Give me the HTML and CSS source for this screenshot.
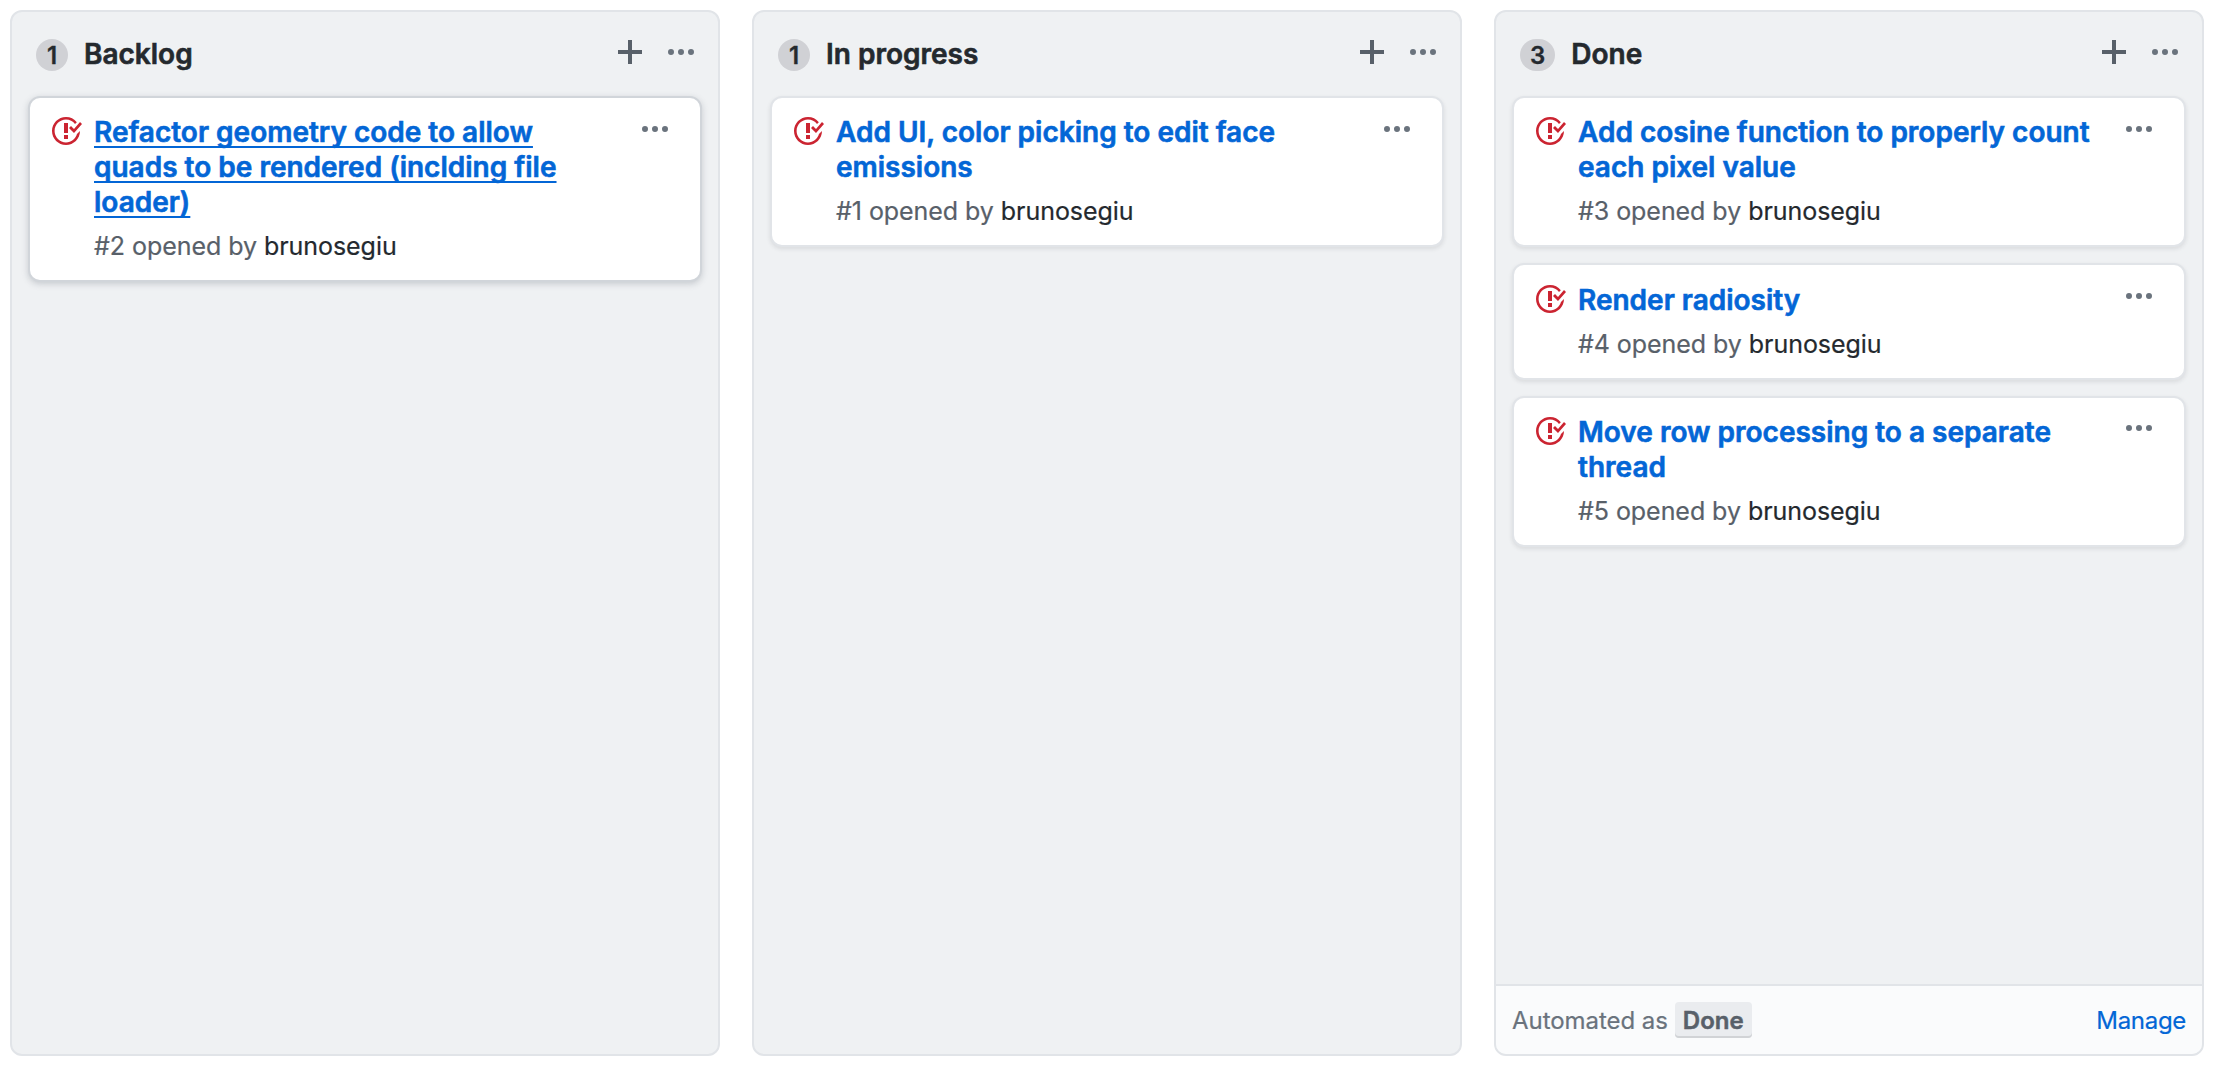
FILE: index.html
```html
<!DOCTYPE html>
<html lang="en">
<head>
<meta charset="utf-8">
<title>Project board</title>
<link rel="stylesheet" href="styles.css">
</head>
<body>
<svg class="defs" aria-hidden="true">
  <symbol id="issue-closed" viewBox="0 0 16 16"><path fill-rule="evenodd" d="M7 10h2v2H7v-2zm2-6H7v5h2V4zm1.5 1.5l-1 1L12 9l4-4.5-1-1L12 7l-1.5-1.5zM8 13.7A5.71 5.71 0 0 1 2.3 8c0-3.14 2.56-5.7 5.7-5.7 1.83 0 3.45.88 4.5 2.2l.92-.92A6.947 6.947 0 0 0 8 1C4.14 1 1 4.14 1 8s3.14 7 7 7 7-3.14 7-7l-1.52 1.52c-.66 2.41-2.86 4.19-5.48 4.19v-.01z"/></symbol>
  <symbol id="plus" viewBox="0 0 12 16"><path d="M12 9H7v5H5V9H0V7h5V2h2v5h5z"/></symbol>
  <symbol id="kebab" viewBox="0 0 13 16"><path d="M1.5 9a1.5 1.5 0 1 0 0-3 1.5 1.5 0 0 0 0 3zm5 0a1.5 1.5 0 1 0 0-3 1.5 1.5 0 0 0 0 3zm5 0a1.5 1.5 0 1 0 0-3 1.5 1.5 0 0 0 0 3z"/></symbol>
</svg>
<main class="board">
  <section class="column">
    <header class="column-header">
      <span class="counter">1</span>
      <h3 class="column-title">Backlog</h3>
      <svg class="plus"><use href="#plus"/></svg>
      <svg class="kebab"><use href="#kebab"/></svg>
    </header>
    <div class="cards">
      <article class="card card-hover">
        <svg class="status"><use href="#issue-closed"/></svg>
        <div class="card-body">
          <h4 class="card-title"><a>Refactor geometry code to allow quads to be rendered (inclding file loader)</a></h4>
          <p class="meta">#2 opened by <a class="author">brunosegiu</a></p>
        </div>
        <svg class="kebab"><use href="#kebab"/></svg>
      </article>
    </div>
  </section>

  <section class="column">
    <header class="column-header">
      <span class="counter">1</span>
      <h3 class="column-title">In progress</h3>
      <svg class="plus"><use href="#plus"/></svg>
      <svg class="kebab"><use href="#kebab"/></svg>
    </header>
    <div class="cards">
      <article class="card">
        <svg class="status"><use href="#issue-closed"/></svg>
        <div class="card-body">
          <h4 class="card-title"><a>Add UI, color picking to edit face emissions</a></h4>
          <p class="meta">#1 opened by <a class="author">brunosegiu</a></p>
        </div>
        <svg class="kebab"><use href="#kebab"/></svg>
      </article>
    </div>
  </section>

  <section class="column">
    <header class="column-header">
      <span class="counter">3</span>
      <h3 class="column-title">Done</h3>
      <svg class="plus"><use href="#plus"/></svg>
      <svg class="kebab"><use href="#kebab"/></svg>
    </header>
    <div class="cards">
      <article class="card">
        <svg class="status"><use href="#issue-closed"/></svg>
        <div class="card-body">
          <h4 class="card-title"><a>Add cosine function to properly count each pixel value</a></h4>
          <p class="meta">#3 opened by <a class="author">brunosegiu</a></p>
        </div>
        <svg class="kebab"><use href="#kebab"/></svg>
      </article>
      <article class="card">
        <svg class="status"><use href="#issue-closed"/></svg>
        <div class="card-body">
          <h4 class="card-title"><a>Render radiosity</a></h4>
          <p class="meta">#4 opened by <a class="author">brunosegiu</a></p>
        </div>
        <svg class="kebab"><use href="#kebab"/></svg>
      </article>
      <article class="card">
        <svg class="status"><use href="#issue-closed"/></svg>
        <div class="card-body">
          <h4 class="card-title"><a>Move row processing to a separate thread</a></h4>
          <p class="meta">#5 opened by <a class="author">brunosegiu</a></p>
        </div>
        <svg class="kebab"><use href="#kebab"/></svg>
      </article>
    </div>
    <footer class="column-footer">
      <span class="automated">Automated as</span>
      <span class="label">Done</span>
      <a class="manage">Manage</a>
    </footer>
  </section>
</main>
</body>
</html>
```
FILE: styles.css
```css
* { box-sizing: border-box; }

body {
  margin: 0;
  background: #fff;
  color: #24292e;
  font-family: Inter, "Liberation Sans", sans-serif;
}

h3, h4, p { margin: 0; }

.defs { display: none; }

svg {
  display: block;
  flex: none;
  fill: currentColor;
}

.board {
  display: flex;
  gap: 32px;
  height: 1066px;
  padding: 10px;
}

.column {
  display: flex;
  flex: none;
  flex-direction: column;
  width: 710px;
  height: 1046px;
  overflow: hidden;
  background: #eff1f3;
  border: 2px solid #e1e4e8;
  border-radius: 12px;
}

.column-header {
  display: flex;
  align-items: flex-start;
  height: 84px;
  padding: 24px 24px 0 24px;
  color: #586069;
}

.counter {
  min-width: 32px;
  height: 32px;
  margin: 3px 16px 0 0;
  padding: 0 10px;
  border-radius: 20px;
  background: #d0d1d5;
  color: #24292e;
  font-size: 24px;
  font-weight: 600;
  line-height: 33px;
  text-align: center;
  -webkit-text-stroke: 0.3px;
}

.column-title {
  flex: 1;
  padding-top: 1px;
  color: #24292e;
  font-size: 28px;
  font-weight: 600;
  line-height: 35px;
  -webkit-text-stroke: 0.6px;
}

.plus {
  width: 24px;
  height: 32px;
  margin-right: 26px;
}

.kebab {
  width: 26px;
  height: 32px;
  color: #6a737d;
}

.column-header .kebab { margin-top: 0.5px; }

.cards {
  display: flex;
  flex: 1;
  flex-direction: column;
  gap: 16px;
  padding: 0 16px;
}

.card {
  display: flex;
  align-items: flex-start;
  padding: 17.2px 32px 14.8px 20px;
  background: #fff;
  border: 2px solid #e1e4e8;
  border-radius: 12px;
  box-shadow: 0 2px 4px rgba(27, 31, 35, 0.1);
}

.card-hover {
  border-color: #d1d5da;
  box-shadow: 0 2px 6px rgba(106, 115, 125, 0.3);
}

.status {
  width: 32px;
  height: 32px;
  margin: 0.3px 12px 0 0;
  color: #cb2431;
}

.card-body {
  flex: 1;
  padding-right: 28px;
}

.card-title {
  color: #0366d6;
  font-size: 28px;
  font-weight: 600;
  line-height: 35px;
  -webkit-text-stroke: 0.6px;
}

.card-hover .card-title a {
  text-decoration: underline;
  text-decoration-skip-ink: none;
  text-decoration-thickness: 2px;
  text-underline-offset: 4px;
}

.meta {
  margin-top: 8px;
  color: #586069;
  font-size: 25px;
  line-height: 37.4px;
  letter-spacing: -0.05px;
  -webkit-text-stroke: 0.2px;
}

.author { color: #24292e; }

.card .kebab { margin-top: -1.7px; }

.column-footer {
  display: flex;
  align-items: center;
  height: 70px;
  padding: 0 16px;
  background: #fafbfc;
  border-top: 2px solid #e1e4e8;
  font-size: 24px;
  line-height: 36px;
  -webkit-text-stroke: 0.2px;
}

.automated {
  padding-top: 2px;
  color: #6a737d;
  letter-spacing: -0.05px;
}

.label {
  height: 36px;
  margin-left: 7px;
  padding: 0 8px;
  border-radius: 4px;
  background: #eaecef;
  box-shadow: inset 0 -2px 0 #d1d3d6;
  color: #586069;
  font-weight: 600;
  line-height: 38px;
  -webkit-text-stroke: 0.5px;
}

.manage {
  margin-left: auto;
  padding-top: 2px;
  color: #0366d6;
  letter-spacing: -0.3px;
}
```
